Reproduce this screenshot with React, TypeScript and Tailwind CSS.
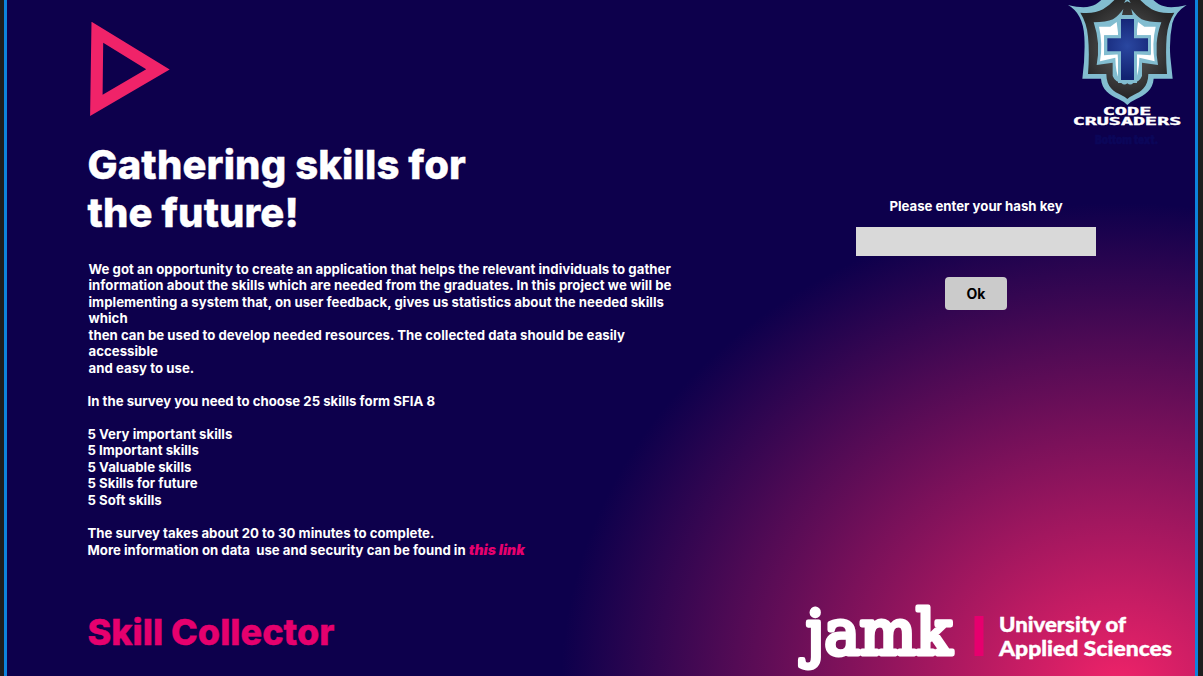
import React from "react";

const intro = [
  "We got an opportunity to create an application that helps the relevant individuals to gather",
  "information about the skills which are needed from the graduates. In this project we will be",
  "implementing a system that, on user feedback, gives us statistics about the needed skills",
  "which",
  "then can be used to develop needed resources. The collected data should be easily",
  "accessible",
  "and easy to use.",
];

const skills = [
  "5 Very important skills",
  "5 Important skills",
  "5 Valuable skills",
  "5 Skills for future",
  "5 Soft skills",
];

function TriangleMark() {
  return (
    <svg className="mt-[22px] ml-[1px] block" width="82" height="94" viewBox="0 0 82 94">
      <path fill="#f02369" fillRule="evenodd" d="M2.5-.3 80.7 47.5 1.1 94ZM14.2 20.8 13.6 72.8 57.2 47.2Z" />
    </svg>
  );
}

function CrusadersLogo() {
  return (
    <svg className="block" width="142" height="150" viewBox="0 0 426 450">
      <defs>
        <radialGradient id="steel" gradientUnits="userSpaceOnUse" cx="223" cy="145" r="150">
          <stop offset="0" stopColor="#606060" />
          <stop offset="1" stopColor="#272727" />
        </radialGradient>
        <radialGradient id="cross" gradientUnits="userSpaceOnUse" cx="223" cy="138" r="95">
          <stop offset="0" stopColor="#2a47a0" />
          <stop offset="1" stopColor="#122272" />
        </radialGradient>
      </defs>
      <path
        fill="#82bdd0"
        d="M45 15Q90 26 112 19Q130 15 148-3H298Q316 15 334 19Q356 26 401 15Q367 36 358 70Q348 120 352 170L359 236H302C300 268 276 286 250 297Q234 304 223 315Q212 304 196 297C170 286 146 268 144 236H88Q97 170 94 110Q90 40 45 15Z"
      />
      <path
        fill="url(#steel)"
        d="M82 38Q125 42 150 28Q172 14 187-3H259Q274 14 296 28Q321 42 364 38Q344 70 341 110Q337 160 342 222H286C286 262 262 276 243 284Q230 290 223 297Q216 290 203 284C184 276 160 262 160 222H105Q110 160 105 110Q102 70 82 38Z"
      />
      <path
        fill="#82bdd0"
        d="M122 67Q160 67 180 58Q196 48 211 27L207 45H239L235 27Q250 48 266 58Q286 67 325 67Q313 100 311 130Q309 165 315 195L267 188V228Q260 245 241 249Q232 258 223 250Q214 258 205 249Q186 245 179 228V188L131 195Q137 165 135 130Q133 100 122 67Z"
      />
      <path fill="#82bdd0" d="M218 0H228L233 9 223 4 213 9Z" />
      <path
        fill="#fff"
        d="M138 80 172 80 191 66 196 106 153 106V166L194 163 199 238Q188 220 187 173L141 184Q150 130 138 80ZM308 80 274 80 255 66 250 106 293 106V166L252 163 247 238Q258 220 259 173L305 184Q296 130 308 80Z"
      />
      <path
        fill="url(#cross)"
        stroke="#82bdd0"
        strokeWidth="18"
        paintOrder="stroke"
        d="M204 57H243V115H285V154H243V240H204V154H163V115H204Z"
      />
      <g fill="#fff" stroke="#fff" strokeWidth="1" fontFamily="DejaVu Sans Mono" fontWeight="700" fontSize="31">
        <text x="149" y="344" textLength="146" lengthAdjust="spacingAndGlyphs">CODE</text>
        <text x="59" y="374" textLength="326" lengthAdjust="spacingAndGlyphs">CRUSADERS</text>
      </g>
      <text
        x="126"
        y="431"
        textLength="190"
        lengthAdjust="spacingAndGlyphs"
        fill="#0b0659"
        stroke="#0b0659"
        strokeWidth="2"
        fontFamily="Inter"
        fontWeight="900"
        fontSize="36"
      >
        Bottom text.
      </text>
    </svg>
  );
}

function JamkLogo() {
  return (
    <svg className="block" width="400" height="80" viewBox="790 596 400 80">
      <text
        x="806"
        y="654"
        textLength="146"
        lengthAdjust="spacingAndGlyphs"
        fill="#fff"
        stroke="#fff"
        strokeWidth="4.800"
        strokeLinejoin="round"
        fontFamily="DejaVu Serif"
        fontSize="61"
      >
        jamk
      </text>
      <rect x="974.500" y="616" width="9" height="40" fill="#e6006e" />
      <g fill="#fff" stroke="#fff" strokeWidth=".4" fontFamily="Lato" fontWeight="900" fontSize="21.500">
        <text x="999" y="632" textLength="127" lengthAdjust="spacingAndGlyphs">University of</text>
        <text x="999" y="656" textLength="173" lengthAdjust="spacingAndGlyphs">Applied Sciences</text>
      </g>
    </svg>
  );
}

export default function App() {
  return (
    <div className="flex h-[676px] w-[1203px] overflow-hidden bg-[#1e1e1e] pl-[4px] font-['Inter',sans-serif] text-white">
      <main className="flex w-[1193.500px] border-r-[3px] border-l-[3px] border-[#0d83dd] bg-[#0d004c] bg-[radial-gradient(558px_485px_at_1112px_688px,#f02369_0%,#0d004c_100%)]">
        <section className="flex w-[681px] shrink-0 flex-col pl-[80.500px]">
          <TriangleMark />
          <h1 className="mt-[25px] text-[40px] leading-[48px] font-extrabold tracking-[0.12px] whitespace-nowrap [-webkit-text-stroke:0.4px_white]">
            Gathering skills for
            <br />
            the future!
          </h1>
          <div className="mt-[23.600px] ml-[1px] text-[13.200px] leading-[16.500px] font-bold tracking-[0.035px] whitespace-nowrap">
            {intro.map((line) => (
              <p key={line}>{line}</p>
            ))}
          </div>
          <div className="mt-[16.500px] text-[13.200px] leading-[16.500px] font-bold tracking-[0.01px] whitespace-nowrap">
            <p>In the survey you need to choose 25 skills form SFIA 8</p>
            <ul className="mt-[16.500px]">
              {skills.map((skill) => (
                <li key={skill}>{skill}</li>
              ))}
            </ul>
            <p className="mt-[16.500px]">The survey takes about 20 to 30 minutes to complete.</p>
            <p className="leading-[18px] whitespace-pre">
              {"More information on data  use and security can be found in "}
              <a className="text-[14px] font-black text-[#e6006e] italic">this link</a>
            </p>
          </div>
          <h2 className="mt-[51.400px] text-[36px] leading-[44px] font-extrabold text-[#e6006e] [-webkit-text-stroke:0.4px_#e6006e]">
            Skill Collector
          </h2>
        </section>
        <section className="flex min-w-0 flex-1 flex-col">
          <div className="flex h-[150px] justify-end">
            <CrusadersLogo />
          </div>
          <form className="mt-[48px] ml-[168px] flex w-[240px] flex-col items-center">
            <label htmlFor="hash" className="text-[13.200px] leading-[17px] font-bold">
              Please enter your hash key
            </label>
            <input id="hash" className="mt-[12px] h-[29px] w-[240px] bg-[#d9d9d9] px-2 text-black outline-none" />
            <button type="button" className="mt-[21px] h-[33px] w-[62px] rounded-[4px] bg-[#cbcbcb] text-[14px] font-bold text-black">
              Ok
            </button>
          </form>
          <div className="mt-auto ml-[102px]">
            <JamkLogo />
          </div>
        </section>
      </main>
    </div>
  );
}
